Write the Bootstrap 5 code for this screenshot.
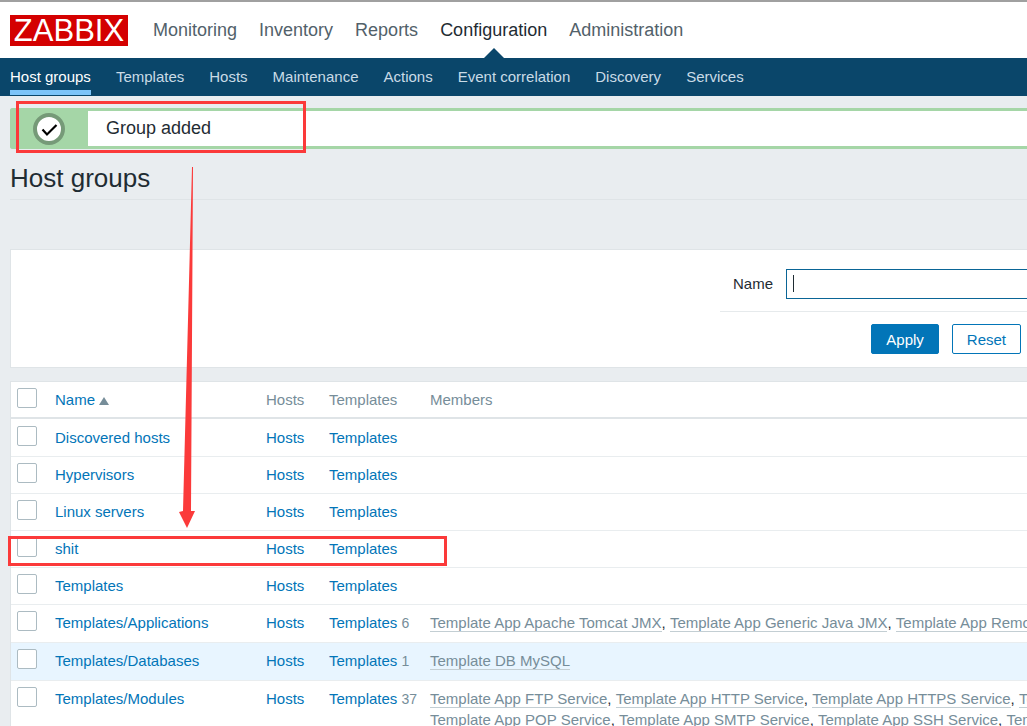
<!DOCTYPE html>
<html lang="en">
<head>
<meta charset="utf-8">
<meta name="viewport" content="width=device-width, initial-scale=1">
<title>Zabbix: Configuration of host groups</title>
<link href="https://cdn.jsdelivr.net/npm/bootstrap@5.3.0/dist/css/bootstrap.min.css" rel="stylesheet">
<style>
body { font: 15px/21px "Liberation Sans", Arial, sans-serif; color: #1f2c33; background: #e9edf0; }
a { color: #0275b8; text-decoration: none; }
.top-bar { height: 58px; border-top: 2px solid #a0a0a0; gap: 25px; padding: 0 10px; font-size: 18px; background: #fff; }
.top-bar .nav { gap: 22px; height: 56px; }
.top-bar .nav-link { padding: 0; line-height: 56px; color: #52616a; position: relative; }
.top-bar .nav-link.active { color: #1f2c33; }
.top-bar .nav-link.active::after { content: ""; position: absolute; bottom: 0; left: 50%; margin-left: -10px; border: 10px solid transparent; border-top: 0; border-bottom-color: #0a466a; }
.brand { background: #d40000; color: #fff; font-size: 31px; line-height: 31px; width: 118px; text-align: center; }
.brand:hover { color: #fff; }
.sub-bar { background: #0a466a; gap: 25px; padding: 0 10px; height: 38px; }
.sub-bar .nav-link { padding: 0; line-height: 37px; height: 37px; color: #c9dbe6; }
.sub-bar .nav-link.active { color: #fff; border-bottom: 5px solid #7dc4f8; }
main { padding: 12px 0 0 10px; }
.msg-good { border: 3px solid #a5d6a7; border-right: 0; border-radius: 3px 0 0 3px; height: 41px; background: #fff; font-size: 18px; }
.msg-icon { background: #a5d6a7; width: 75px; padding-left: 20px; }
.msg-text { padding-left: 18px; }
h1 { font-size: 26px; line-height: 30px; margin: 0; padding: 14px 0 6px; border-bottom: 1px solid #dfe4e7; }
.panel { background: #fff; border: 1px solid #dfe4e7; border-right: 0; }
.filter-panel { margin: 49px 0 13px; padding: 19px 0 13px; }
.filter-form { width: 30%; min-width: 307px; }
.filter-row { gap: 13px; padding: 0 0 12px 13px; border-bottom: 1px solid #e6eaec; }
.filter-row label { padding-bottom: 2px; }
.name-box { height: 30px; border: 1px solid #0a6596; border-right: 0; border-radius: 0; padding: 0 7px; font-size: 15px; }
.caret-line { position: absolute; left: 7px; top: 6px; width: 1px; height: 17px; background: #1f2c33; }
.btn-row { gap: 13px; padding: 12px 6px 0 0; }
.btn-row .btn { font-size: 15px; line-height: 26px; padding: 2px 14px 0; border-radius: 2px; border-color: #0275b8; color: #0275b8; background: #fff; }
.btn-row .btn.main-btn { background: #0275b8; color: #fff; }
.groups { table-layout: fixed; border-collapse: separate; border-spacing: 0; }
.groups th, .groups td { font-weight: 400; padding: 7px 0 8px 6px; border-bottom: 1px solid #e9edef; vertical-align: top; white-space: nowrap; overflow: hidden; }
.groups th { color: #768d99; border-bottom: 2px solid #dfe4e7; padding-bottom: 7px; }
.groups .hovered td { background: #e8f5ff; }
.groups tbody tr:first-child td { padding-top: 8px; }
.groups .form-check-input { display: block; width: 20px; height: 20px; margin: -1px 0 0; border: 1px solid #acbbc2; border-radius: 2px; }
.c-check { width: 38px; } .c-name { width: 211px; } .c-hosts { width: 63px; } .c-tpl { width: 101px; }
.count { color: #768d99; font-size: 14px; }
.members a { color: #768d99; border-bottom: 1px solid #c3ced3; line-height: 16px; display: inline-block; }
.sort-up { display: inline-block; border: 5px solid transparent; border-top: 0; border-bottom: 8px solid #768d99; }
.notes { position: absolute; left: 0; top: 0; pointer-events: none; }
</style>
</head>
<body class="vh-100 overflow-hidden position-relative">
<header>
  <div class="top-bar d-flex align-items-center">
    <a class="brand" href="#">ZABBIX</a>
    <nav class="nav flex-nowrap" aria-label="Main">
      <a class="nav-link" href="#">Monitoring</a>
      <a class="nav-link" href="#">Inventory</a>
      <a class="nav-link" href="#">Reports</a>
      <a class="nav-link active" href="#">Configuration</a>
      <a class="nav-link" href="#">Administration</a>
    </nav>
  </div>
  <nav class="sub-bar nav flex-nowrap" aria-label="Configuration">
    <a class="nav-link active" href="#">Host groups</a>
    <a class="nav-link" href="#">Templates</a>
    <a class="nav-link" href="#">Hosts</a>
    <a class="nav-link" href="#">Maintenance</a>
    <a class="nav-link" href="#">Actions</a>
    <a class="nav-link text-nowrap" href="#">Event correlation</a>
    <a class="nav-link" href="#">Discovery</a>
    <a class="nav-link" href="#">Services</a>
  </nav>
</header>
<main>
  <div class="msg-good d-flex" role="status">
    <div class="msg-icon d-flex align-items-center">
      <svg width="32" height="32" viewBox="0 0 32 32" aria-hidden="true"><circle cx="16" cy="16" r="14" fill="#fff" stroke="#769a78" stroke-width="4"/><path d="M9.500 16.500l4.500 5L23.500 12" fill="none" stroke="#000" stroke-width="2.200"/></svg>
    </div>
    <div class="msg-text d-flex align-items-center">Group added</div>
  </div>
  <h1>Host groups</h1>
  <section class="panel filter-panel d-flex justify-content-end">
    <form class="filter-form">
      <div class="filter-row d-flex align-items-center">
        <label for="filter-name">Name</label>
        <div class="position-relative flex-grow-1">
          <input class="name-box w-100 d-block" id="filter-name" type="text">
          <span class="caret-line"></span>
        </div>
      </div>
      <div class="btn-row d-flex justify-content-end">
        <button class="btn main-btn" type="button">Apply</button>
        <button class="btn" type="reset">Reset</button>
      </div>
    </form>
  </section>
  <section class="panel">
    <table class="groups w-100">
      <colgroup><col class="c-check"><col class="c-name"><col class="c-hosts"><col class="c-tpl"><col></colgroup>
      <thead>
        <tr><th><input class="form-check-input" type="checkbox" aria-label="Select all"></th><th><a href="#">Name <span class="sort-up"></span></a></th><th>Hosts</th><th>Templates</th><th>Members</th></tr>
      </thead>
      <tbody>
        <tr><td><input class="form-check-input" type="checkbox" aria-label="Discovered hosts"></td><td><a href="#">Discovered hosts</a></td><td><a href="#">Hosts</a></td><td><a href="#">Templates</a></td><td></td></tr>
        <tr><td><input class="form-check-input" type="checkbox" aria-label="Hypervisors"></td><td><a href="#">Hypervisors</a></td><td><a href="#">Hosts</a></td><td><a href="#">Templates</a></td><td></td></tr>
        <tr><td><input class="form-check-input" type="checkbox" aria-label="Linux servers"></td><td><a href="#">Linux servers</a></td><td><a href="#">Hosts</a></td><td><a href="#">Templates</a></td><td></td></tr>
        <tr><td><input class="form-check-input" type="checkbox" aria-label="shit"></td><td><a href="#">shit</a></td><td><a href="#">Hosts</a></td><td><a href="#">Templates</a></td><td></td></tr>
        <tr><td><input class="form-check-input" type="checkbox" aria-label="Templates"></td><td><a href="#">Templates</a></td><td><a href="#">Hosts</a></td><td><a href="#">Templates</a></td><td></td></tr>
        <tr><td><input class="form-check-input" type="checkbox" aria-label="Templates/Applications"></td><td><a href="#">Templates/Applications</a></td><td><a href="#">Hosts</a></td><td><a href="#">Templates</a> <span class="count">6</span></td><td class="members"><a href="#">Template App Apache Tomcat JMX</a>, <a href="#">Template App Generic Java JMX</a>, <a href="#">Template App Remote Zabbix proxy</a></td></tr>
        <tr class="hovered"><td><input class="form-check-input" type="checkbox" aria-label="Templates/Databases"></td><td><a href="#">Templates/Databases</a></td><td><a href="#">Hosts</a></td><td><a href="#">Templates</a> <span class="count">1</span></td><td class="members"><a href="#">Template DB MySQL</a></td></tr>
        <tr><td><input class="form-check-input" type="checkbox" aria-label="Templates/Modules"></td><td><a href="#">Templates/Modules</a></td><td><a href="#">Hosts</a></td><td><a href="#">Templates</a> <span class="count">37</span></td><td class="members"><a href="#">Template App FTP Service</a>, <a href="#">Template App HTTP Service</a>, <a href="#">Template App HTTPS Service</a>, <a href="#">Template App IMAP Service</a>,<br><a href="#">Template App POP Service</a>, <a href="#">Template App SMTP Service</a>, <a href="#">Template App SSH Service</a>, <a href="#">Template App Telnet Service</a></td></tr>
      </tbody>
    </table>
  </section>
</main>
<!-- Marker frames and arrow laid over the page -->
<svg class="notes" width="460" height="580" viewBox="0 0 460 580" aria-hidden="true">
  <g fill="none" stroke="#fb3a3a" stroke-width="3"><rect x="17.500" y="102.500" width="287" height="49"/><rect x="9.500" y="537.500" width="436" height="27"/></g>
  <path d="M192 167h1L191 511h4l-8 17-8-16 4-1z" fill="#fb3a3a"/>
</svg>
<script src="https://cdn.jsdelivr.net/npm/bootstrap@5.3.0/dist/js/bootstrap.bundle.min.js"></script>
</body>
</html>
